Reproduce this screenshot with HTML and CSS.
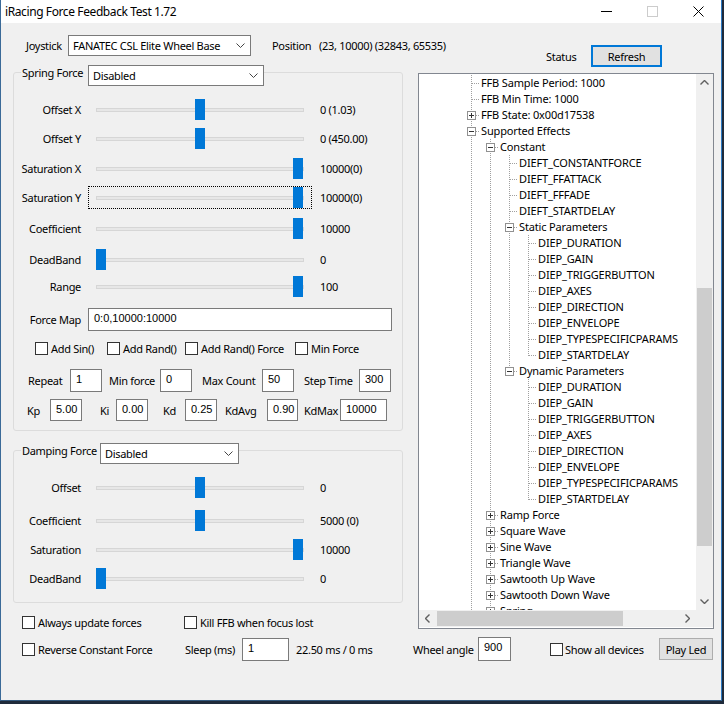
FILE: index.html
```html
<!DOCTYPE html>
<html>
<head>
<meta charset="utf-8">
<title>iRacing Force Feedback Test 1.72</title>
<link rel="stylesheet" href="styles.css">
</head>
<body>
<div class="window">
  <div class="titlebar">
    <span class="title">iRacing Force Feedback Test 1.72</span>
    <div class="caps">
      <span class="cap"><svg width="11" height="1" viewBox="0 0 11 1"><line x1="0" y1="0.5" x2="11" y2="0.5" stroke="#000" stroke-width="1"/></svg></span>
      <span class="cap"><svg width="11" height="11" viewBox="0 0 11 11"><rect x="0.5" y="0.5" width="10" height="10" fill="none" stroke="#cccccc" stroke-width="1"/></svg></span>
      <span class="cap"><svg width="11" height="11" viewBox="0 0 11 11"><path d="M0.5 0.5L10.5 10.5M10.5 0.5L0.5 10.5" stroke="#000" stroke-width="1" fill="none"/></svg></span>
    </div>
  </div>
  <div class="client">
    <div class="left">
      <div class="joy-row">
        <span class="joy-lbl">Joystick</span>
        <div class="combo joy-combo"><span>FANATEC CSL Elite Wheel Base</span><svg class="chev" width="9" height="5" viewBox="0 0 9 5"><polyline points="0.5,0.5 4.5,4.5 8.5,0.5" fill="none" stroke="#444" stroke-width="1"/></svg></div>
        <span class="pos-lbl">Position</span>
        <span class="pos-val">(23, 10000) (32843, 65535)</span>
      </div>

      <div class="group spring">
        <div class="group-head">
          <span class="glbl">Spring Force</span>
          <div class="combo"><span>Disabled</span><svg class="chev" width="9" height="5" viewBox="0 0 9 5"><polyline points="0.5,0.5 4.5,4.5 8.5,0.5" fill="none" stroke="#444" stroke-width="1"/></svg></div>
        </div>
        <div class="sliders">
          <div class="srow"><span class="slbl">Offset X</span><div class="slider"><span class="thumb" style="--v:0.5"></span></div><span class="sval">0 (1.03)</span></div>
          <div class="srow"><span class="slbl">Offset Y</span><div class="slider"><span class="thumb" style="--v:0.5"></span></div><span class="sval">0 (450.00)</span></div>
          <div class="srow"><span class="slbl">Saturation X</span><div class="slider"><span class="thumb" style="--v:1"></span></div><span class="sval">10000(0)</span></div>
          <div class="srow"><span class="slbl">Saturation Y</span><div class="slider focus"><span class="thumb" style="--v:1"></span></div><span class="sval">10000(0)</span></div>
          <div class="srow"><span class="slbl">Coefficient</span><div class="slider"><span class="thumb" style="--v:1"></span></div><span class="sval">10000</span></div>
          <div class="srow"><span class="slbl">DeadBand</span><div class="slider"><span class="thumb" style="--v:0"></span></div><span class="sval">0</span></div>
          <div class="srow"><span class="slbl">Range</span><div class="slider"><span class="thumb" style="--v:1"></span></div><span class="sval">100</span></div>
        </div>
        <div class="fmap-row">
          <span class="slbl">Force Map</span>
          <div class="edit fmap">0:0,10000:10000</div>
        </div>
        <div class="checks">
          <label class="cb"><span class="box13"></span>Add Sin()</label>
          <label class="cb"><span class="box13"></span>Add Rand()</label>
          <label class="cb"><span class="box13"></span>Add Rand() Force</label>
          <label class="cb"><span class="box13"></span>Min Force</label>
        </div>
        <div class="prow repeat-row">
          <span class="plbl ml14 w42">Repeat</span><div class="edit w32">1</div>
          <span class="plbl ml7 w51">Min force</span><div class="edit w32">0</div>
          <span class="plbl ml10 w60">Max Count</span><div class="edit w32">50</div>
          <span class="plbl ml10 w55">Step Time</span><div class="edit w32">300</div>
        </div>
        <div class="prow kp-row">
          <span class="plbl ml13 w23">Kp</span><div class="edit w32">5.00</div>
          <span class="plbl ml18 w16">Ki</span><div class="edit w32">0.00</div>
          <span class="plbl ml15 w22">Kd</span><div class="edit w32">0.25</div>
          <span class="plbl ml8 w42">KdAvg</span><div class="edit w31">0.90</div>
          <span class="plbl ml6 w36">KdMax</span><div class="edit w47">10000</div>
        </div>
      </div>

      <div class="group damping">
        <div class="group-head">
          <span class="glbl">Damping Force</span>
          <div class="combo"><span>Disabled</span><svg class="chev" width="9" height="5" viewBox="0 0 9 5"><polyline points="0.5,0.5 4.5,4.5 8.5,0.5" fill="none" stroke="#444" stroke-width="1"/></svg></div>
        </div>
        <div class="sliders">
          <div class="srow"><span class="slbl">Offset</span><div class="slider"><span class="thumb" style="--v:0.5"></span></div><span class="sval">0</span></div>
          <div class="srow"><span class="slbl">Coefficient</span><div class="slider"><span class="thumb" style="--v:0.5"></span></div><span class="sval">5000 (0)</span></div>
          <div class="srow"><span class="slbl">Saturation</span><div class="slider"><span class="thumb" style="--v:1"></span></div><span class="sval">10000</span></div>
          <div class="srow"><span class="slbl">DeadBand</span><div class="slider"><span class="thumb" style="--v:0"></span></div><span class="sval">0</span></div>
        </div>
      </div>

      <div class="bottom">
        <label class="cb"><span class="box13"></span>Always update forces</label>
        <label class="cb"><span class="box13"></span>Kill FFB when focus lost</label>
        <label class="cb"><span class="box13"></span>Reverse Constant Force</label>
        <div class="sleep">
          <span class="sleep-lbl">Sleep (ms)</span>
          <div class="edit w47 h23">1</div>
          <span class="sleep-val">22.50 ms / 0 ms</span>
        </div>
      </div>
    </div>

    <div class="right">
      <div class="status-row">
        <span class="status">Status</span>
        <div class="btn refresh">Refresh</div>
      </div>
      <div class="tree">
        <div class="tree-body">
          <div class="node"><i class="g t"></i><span>FFB Sample Period: 1000</span></div>
          <div class="node"><i class="g t"></i><span>FFB Min Time: 1000</span></div>
          <div class="node"><i class="g t"><b class="xbox plus"></b></i><span>FFB State: 0x00d17538</span></div>
          <div class="node"><i class="g t"><b class="xbox"></b></i><span>Supported Effects</span></div>
          <div class="node"><i class="g v"></i><i class="g t"><b class="xbox"></b></i><span>Constant</span></div>
          <div class="node"><i class="g v"></i><i class="g v"></i><i class="g t"></i><span>DIEFT_CONSTANTFORCE</span></div>
          <div class="node"><i class="g v"></i><i class="g v"></i><i class="g t"></i><span>DIEFT_FFATTACK</span></div>
          <div class="node"><i class="g v"></i><i class="g v"></i><i class="g t"></i><span>DIEFT_FFFADE</span></div>
          <div class="node"><i class="g v"></i><i class="g v"></i><i class="g t"></i><span>DIEFT_STARTDELAY</span></div>
          <div class="node"><i class="g v"></i><i class="g v"></i><i class="g t"><b class="xbox"></b></i><span>Static Parameters</span></div>
          <div class="node"><i class="g v"></i><i class="g v"></i><i class="g v"></i><i class="g t"></i><span>DIEP_DURATION</span></div>
          <div class="node"><i class="g v"></i><i class="g v"></i><i class="g v"></i><i class="g t"></i><span>DIEP_GAIN</span></div>
          <div class="node"><i class="g v"></i><i class="g v"></i><i class="g v"></i><i class="g t"></i><span>DIEP_TRIGGERBUTTON</span></div>
          <div class="node"><i class="g v"></i><i class="g v"></i><i class="g v"></i><i class="g t"></i><span>DIEP_AXES</span></div>
          <div class="node"><i class="g v"></i><i class="g v"></i><i class="g v"></i><i class="g t"></i><span>DIEP_DIRECTION</span></div>
          <div class="node"><i class="g v"></i><i class="g v"></i><i class="g v"></i><i class="g t"></i><span>DIEP_ENVELOPE</span></div>
          <div class="node"><i class="g v"></i><i class="g v"></i><i class="g v"></i><i class="g t"></i><span>DIEP_TYPESPECIFICPARAMS</span></div>
          <div class="node"><i class="g v"></i><i class="g v"></i><i class="g v"></i><i class="g l"></i><span>DIEP_STARTDELAY</span></div>
          <div class="node"><i class="g v"></i><i class="g v"></i><i class="g l"><b class="xbox"></b></i><span>Dynamic Parameters</span></div>
          <div class="node"><i class="g v"></i><i class="g v"></i><i class="g"></i><i class="g t"></i><span>DIEP_DURATION</span></div>
          <div class="node"><i class="g v"></i><i class="g v"></i><i class="g"></i><i class="g t"></i><span>DIEP_GAIN</span></div>
          <div class="node"><i class="g v"></i><i class="g v"></i><i class="g"></i><i class="g t"></i><span>DIEP_TRIGGERBUTTON</span></div>
          <div class="node"><i class="g v"></i><i class="g v"></i><i class="g"></i><i class="g t"></i><span>DIEP_AXES</span></div>
          <div class="node"><i class="g v"></i><i class="g v"></i><i class="g"></i><i class="g t"></i><span>DIEP_DIRECTION</span></div>
          <div class="node"><i class="g v"></i><i class="g v"></i><i class="g"></i><i class="g t"></i><span>DIEP_ENVELOPE</span></div>
          <div class="node"><i class="g v"></i><i class="g v"></i><i class="g"></i><i class="g t"></i><span>DIEP_TYPESPECIFICPARAMS</span></div>
          <div class="node"><i class="g v"></i><i class="g v"></i><i class="g"></i><i class="g l"></i><span>DIEP_STARTDELAY</span></div>
          <div class="node"><i class="g v"></i><i class="g t"><b class="xbox plus"></b></i><span>Ramp Force</span></div>
          <div class="node"><i class="g v"></i><i class="g t"><b class="xbox plus"></b></i><span>Square Wave</span></div>
          <div class="node"><i class="g v"></i><i class="g t"><b class="xbox plus"></b></i><span>Sine Wave</span></div>
          <div class="node"><i class="g v"></i><i class="g t"><b class="xbox plus"></b></i><span>Triangle Wave</span></div>
          <div class="node"><i class="g v"></i><i class="g t"><b class="xbox plus"></b></i><span>Sawtooth Up Wave</span></div>
          <div class="node"><i class="g v"></i><i class="g t"><b class="xbox plus"></b></i><span>Sawtooth Down Wave</span></div>
          <div class="node"><i class="g v"></i><i class="g t"><b class="xbox plus"></b></i><span>Spring</span></div>
        </div>
        <div class="vscroll">
          <span class="sarrow"><svg width="9" height="5" viewBox="0 0 9 5"><polyline points="0.5,4.5 4.5,0.5 8.5,4.5" fill="none" stroke="#606060" stroke-width="1.4"/></svg></span>
          <div class="vtrack"><span class="vthumb"></span></div>
          <span class="sarrow"><svg width="9" height="5" viewBox="0 0 9 5"><polyline points="0.5,0.5 4.5,4.5 8.5,0.5" fill="none" stroke="#606060" stroke-width="1.4"/></svg></span>
        </div>
        <div class="hscroll">
          <span class="sarrow"><svg width="5" height="9" viewBox="0 0 5 9"><polyline points="4.5,0.5 0.5,4.5 4.5,8.5" fill="none" stroke="#606060" stroke-width="1.4"/></svg></span>
          <div class="htrack"><span class="hthumb"></span></div>
          <span class="sarrow"><svg width="5" height="9" viewBox="0 0 5 9"><polyline points="0.5,0.5 4.5,4.5 0.5,8.5" fill="none" stroke="#606060" stroke-width="1.4"/></svg></span>
        </div>
        <div class="corner"></div>
      </div>
      <div class="wheel-row">
        <span class="wheel-lbl">Wheel angle</span>
        <div class="edit w33 h24">900</div>
        <label class="cb show-all"><span class="box13"></span>Show all devices</label>
        <div class="btn playled">Play Led</div>
      </div>
    </div>
  </div>
</div>
</body>
</html>
```

FILE: styles.css
```css
* { box-sizing: border-box; }
html, body { margin: 0; padding: 0; }
body {
  width: 724px;
  height: 704px;
  overflow: hidden;
  background: #1f2b3b;
  font-family: "Noto Sans", "Open Sans", sans-serif;
  font-size: 11px;
  letter-spacing: -0.3px;
  color: #000;
}
.window {
  width: 722px;
  height: 701px;
  background: #f0f0f0;
  border-left: 1px solid #3b6a98;
  border-right: 1px solid #2c79c2;
  border-bottom: 1px solid #34597e;
  display: flex;
  flex-direction: column;
}
.titlebar {
  flex: none;
  height: 23px;
  background: #fff;
  display: flex;
  align-items: center;
}
.title { flex: 1; padding-left: 4px; font-size: 12px; letter-spacing: -0.4px; white-space: nowrap; }
.caps { display: flex; }
.cap { width: 46px; height: 23px; display: flex; align-items: center; justify-content: center; }
.cap svg { display: block; }

.client { display: flex; gap: 10px; padding: 12px 0 0 12px; }
.left { width: 390px; flex: none; }
.right { width: 300px; flex: none; display: flex; flex-direction: column; }

.joy-row { height: 21px; display: flex; align-items: center; white-space: nowrap; }
.joy-lbl { flex: none; margin-left: 13px; width: 42px; }
.combo {
  flex: none;
  height: 21px;
  background: #fff;
  border: 1px solid #7a7a7a;
  display: flex;
  align-items: center;
  justify-content: space-between;
  padding: 0 5px 0 4px;
  white-space: nowrap;
}
.chev { display: block; flex: none; }
.joy-combo { width: 183px; }
.pos-lbl { flex: none; margin-left: 21px; width: 47px; }
.pos-val { flex: none; white-space: nowrap; }

.group {
  border: 1px solid #dcdcdc;
  border-radius: 3px;
}
.spring { margin-top: 16px; padding-bottom: 9px; }
.damping { margin-top: 19px; padding-bottom: 12px; }
.group-head {
  display: flex;
  align-items: flex-start;
  margin: -8px 0 0 7px;
  width: max-content;
  background: #f0f0f0;
}
.glbl { flex: none; line-height: 16px; padding-left: 1px; white-space: nowrap; }
.spring .glbl { width: 67px; }
.damping .glbl { width: 79px; }
.spring .combo { width: 176px; }
.damping .combo { width: 139px; }

.sliders { display: grid; margin-top: 12px; }
.spring .sliders { grid-template-rows: 29px 30px 29px 31px 31px 27px 23px; }
.damping .sliders { grid-template-rows: 33px 29px 29px 23px; }
.srow { display: flex; align-items: flex-start; white-space: nowrap; }
.slbl { width: 67px; text-align: right; line-height: 23px; flex: none; }
.slider {
  margin-left: 7px;
  width: 224px;
  height: 23px;
  flex: none;
  padding: 1px 0 0 8px;
  background:
    linear-gradient(#e7e7e7, #e7e7e7) 9px 11px / 206px 2px no-repeat,
    linear-gradient(#d6d6d6, #d6d6d6) 8px 10px / 208px 4px no-repeat;
}
.thumb {
  display: block;
  width: 10px;
  height: 21px;
  background: #0078d7;
  margin-left: calc(var(--v) * 197px);
}
.focus { outline: 1px dotted #000; outline-offset: -1px; }
.sval { margin-left: 8px; line-height: 23px; }

.edit {
  background: #fff;
  border: 1px solid #7a7a7a;
  height: 23px;
  flex: none;
  font-family: "Liberation Sans", Arial, sans-serif;
  font-size: 11px;
  letter-spacing: 0;
  line-height: 14px;
  padding: 2px 0 0 5px;
  white-space: nowrap;
}
.fmap-row { display: flex; align-items: center; margin-top: 10px; }
.fmap { margin-left: 7px; width: 304px; }

.checks {
  display: grid;
  grid-template-columns: 72px 78px 110px auto;
  margin-top: 9px;
  padding-left: 21px;
  height: 16px;
}
.cb { display: flex; align-items: center; gap: 3px; white-space: nowrap; }
.box13 { width: 13px; height: 13px; border: 1px solid #333; background: #fff; flex: none; }

.prow { display: flex; align-items: center; white-space: nowrap; }
.repeat-row { margin-top: 13px; height: 23px; }
.kp-row { margin-top: 7px; height: 22px; }
.kp-row .edit { height: 22px; }
.plbl { flex: none; }
.ml6 { margin-left: 6px; } .ml7 { margin-left: 7px; } .ml8 { margin-left: 8px; }
.ml10 { margin-left: 10px; } .ml13 { margin-left: 13px; } .ml14 { margin-left: 14px; }
.ml15 { margin-left: 15px; } .ml18 { margin-left: 18px; }
.w16 { width: 16px; } .w22 { width: 22px; } .w23 { width: 23px; } .w31 { width: 31px; }
.w32 { width: 32px; } .w33 { width: 33px; } .w36 { width: 36px; } .w42 { width: 42px; }
.w47 { width: 47px; } .w51 { width: 51px; } .w55 { width: 55px; } .w60 { width: 60px; }
.h23 { height: 23px; } .h24 { height: 24px; }

.bottom {
  margin-top: 11px;
  padding-left: 9px;
  display: grid;
  grid-template-columns: 162px auto;
  grid-template-rows: 16px 23px;
  row-gap: 8px;
  align-items: center;
}
.sleep { display: flex; align-items: center; white-space: nowrap; }
.sleep-lbl { flex: none; width: 58px; padding-left: 1px; }
.sleep-val { margin-left: 7px; }

.status-row { margin-top: 10px; height: 22px; display: flex; align-items: center; padding-left: 133px; }
.status { width: 45px; }
.btn {
  flex: none;
  height: 22px;
  background: #e1e1e1;
  border: 1px solid #adadad;
  display: flex;
  align-items: center;
  justify-content: center;
  white-space: nowrap;
}
.refresh { width: 71px; border-color: #0078d7; box-shadow: inset 0 0 0 1px #0078d7; }

.tree {
  margin: 6px 0 0 5px;
  width: 296px;
  height: 556px;
  border: 1px solid #828790;
  background: #fff;
  display: grid;
  grid-template-columns: 277px 17px;
  grid-template-rows: 536px 17px;
  overflow: hidden;
}
.tree-body {
  overflow: hidden;
  padding: 1px 0 0 43px;
  letter-spacing: -0.15px;
  --vd: repeating-linear-gradient(to bottom, #a0a0a0 0 1px, transparent 1px 2px);
  --hd: repeating-linear-gradient(to right, #a0a0a0 0 1px, transparent 1px 2px);
}
.node { display: flex; height: 16px; line-height: 16px; white-space: nowrap; font-size: 11px; }
.g { display: flex; align-items: center; flex: none; width: 19px; height: 16px; }
.v { background: var(--vd) 9px 0 / 1px 16px no-repeat; }
.t { background: var(--vd) 9px 0 / 1px 16px no-repeat, var(--hd) 10px 8px / 8px 1px no-repeat; }
.l { background: var(--vd) 9px 0 / 1px 9px no-repeat, var(--hd) 10px 8px / 8px 1px no-repeat; }
.xbox {
  display: block;
  width: 9px;
  height: 9px;
  margin-left: 5px;
  margin-top: 1px;
  border: 1px solid #919191;
  background: linear-gradient(#333, #333) center / 5px 1px no-repeat, #fff;
}
.xbox.plus {
  background:
    linear-gradient(#333, #333) center / 5px 1px no-repeat,
    linear-gradient(#333, #333) center / 1px 5px no-repeat,
    #fff;
}

.vscroll { background: #f0f0f0; display: flex; flex-direction: column; }
.hscroll { background: #f0f0f0; display: flex; }
.corner { background: #f0f0f0; }
.sarrow { flex: none; width: 17px; height: 17px; display: flex; align-items: center; justify-content: center; }
.sarrow svg { display: block; }
.vtrack { flex: 1; padding: 0 1px; }
.vthumb { display: block; height: 258px; margin-top: 197px; background: #cdcdcd; }
.htrack { flex: 1; padding: 1px 0; }
.hthumb { display: block; width: 186px; height: 15px; margin-left: 1px; background: #cdcdcd; }

.wheel-row { margin-top: 8px; height: 24px; display: flex; align-items: center; white-space: nowrap; }
.wheel-lbl { flex: none; width: 65px; }
.show-all { margin-left: 39px; gap: 2px; }
.playled { margin-left: auto; width: 54px; }
```
